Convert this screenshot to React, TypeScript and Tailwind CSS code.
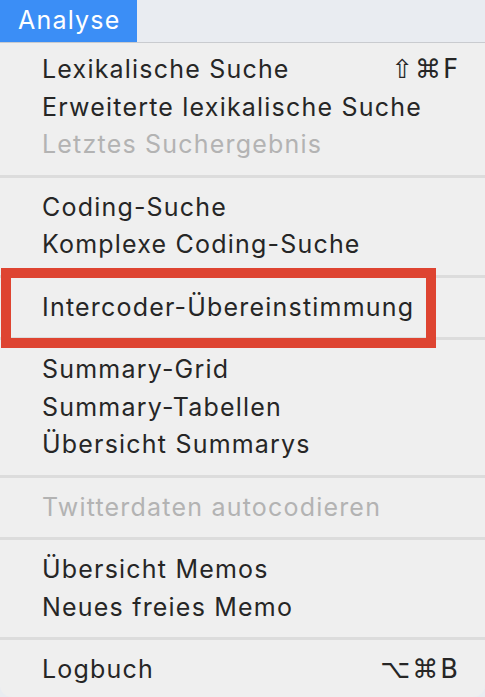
import React from 'react';

type Item = { label: string; shortcut?: string; disabled?: boolean };

const groups: Item[][] = [
  [
    { label: 'Lexikalische Suche', shortcut: '⇧⌘F' },
    { label: 'Erweiterte lexikalische Suche' },
    { label: 'Letztes Suchergebnis', disabled: true },
  ],
  [{ label: 'Coding-Suche' }, { label: 'Komplexe Coding-Suche' }],
  [{ label: 'Intercoder-Übereinstimmung' }],
  [{ label: 'Summary-Grid' }, { label: 'Summary-Tabellen' }, { label: 'Übersicht Summarys' }],
  [{ label: 'Twitterdaten autocodieren', disabled: true }],
  [{ label: 'Übersicht Memos' }, { label: 'Neues freies Memo' }],
  [{ label: 'Logbuch', shortcut: '⌥⌘B' }],
];

function MenuRow({ item }: { item: Item }) {
  return (
    <div className="flex h-[37.5px] items-center justify-between pl-[42px] pr-[28px]">
      <span className={item.disabled ? 'text-[#b3b3b3]' : 'text-[#262626]'}>{item.label}</span>
      {item.shortcut && (
        <span
          className="-mr-[3px] text-[26px] text-[#262626] tracking-[2px]"
          style={{ fontFamily: '"DejaVu Sans", Inter, sans-serif' }}
        >
          {item.shortcut}
        </span>
      )}
    </div>
  );
}

export default function App() {
  return (
    <div className="relative h-[697px] w-[485px] overflow-hidden bg-[#e9ecf1] font-['Inter',sans-serif] text-[25px] tracking-[1.2px]">
      <div className="flex h-[43px] border-b border-[#c9cbcf]">
        <div className="flex w-[137px] items-center bg-[#3b8ef6] pl-[18px] text-[25px] text-white">Analyse</div>
      </div>

      <div className="rounded-b-[12px] bg-[#efefef] pt-[8px] pb-[8px]">
        {groups.map((group, gi) => (
          <div key={gi}>
            {gi > 0 && (
              <div className="flex h-[25px] items-center">
                <div className="h-[3px] w-full bg-[#dcdcdc]" />
              </div>
            )}
            {group.map((item) => (
              <MenuRow key={item.label} item={item} />
            ))}
          </div>
        ))}
      </div>

      {/* highlight annotation */}
      <div className="pointer-events-none absolute left-[1px] top-[268px] h-[80px] w-[435px] border-[10px] border-[#de4431]" />
    </div>
  );
}
